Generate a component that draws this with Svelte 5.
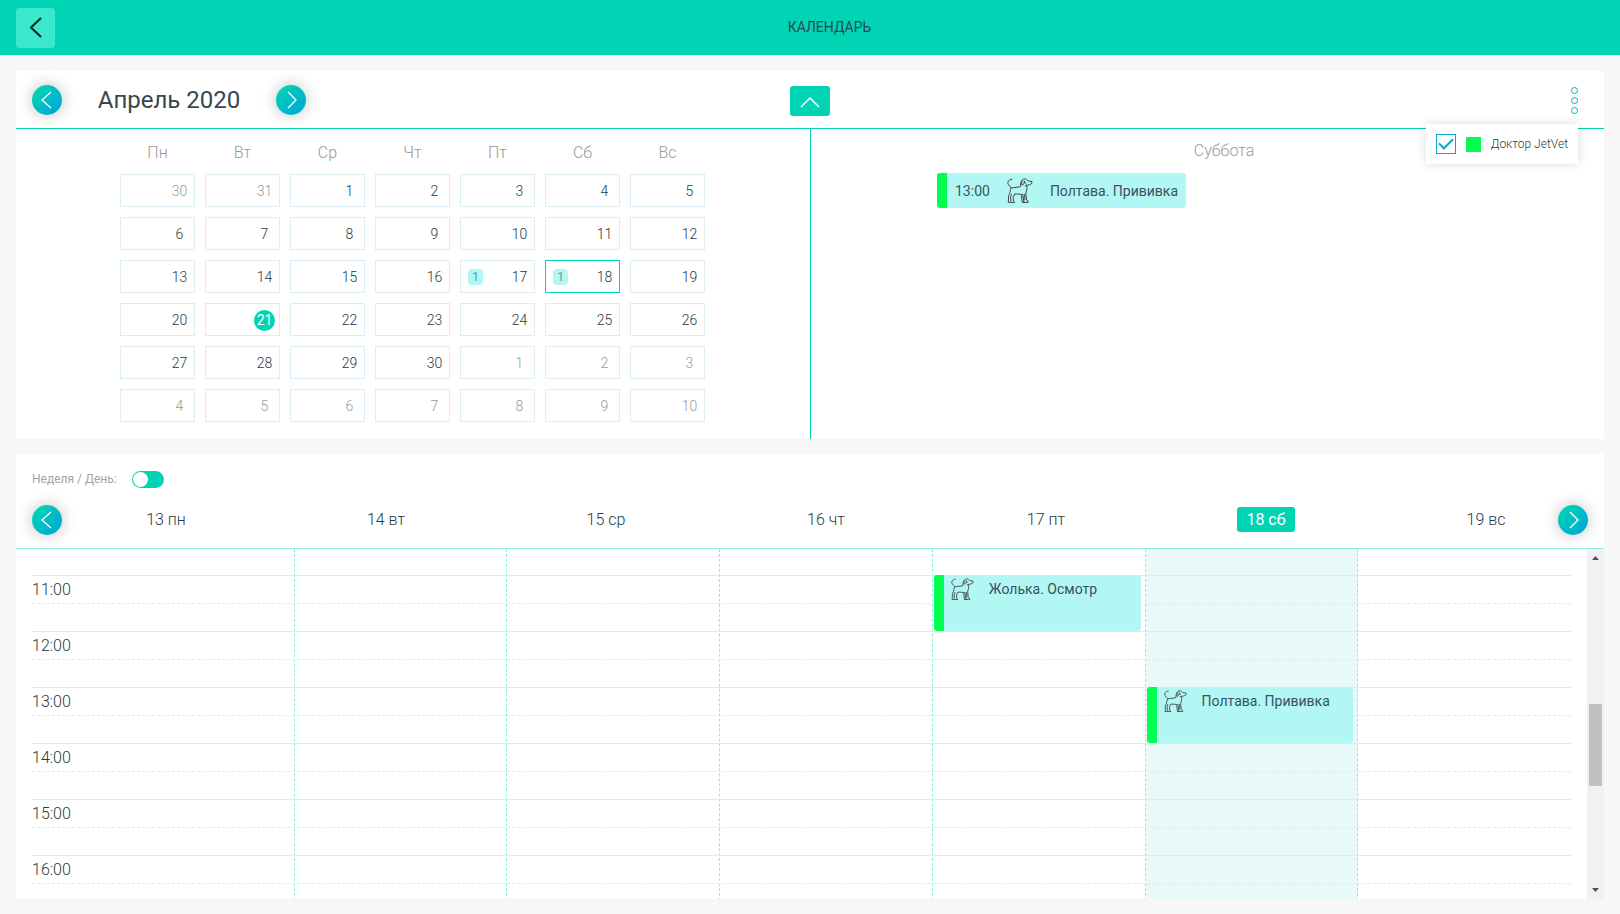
<script>
  const weekdays = ['Пн', 'Вт', 'Ср', 'Чт', 'Пт', 'Сб', 'Вс'];
  const days = Array.from({ length: 42 }, (_, i) => {
    const n = i - 1;
    if (n < 1) return { n: 31 + n, other: true };
    if (n > 30) return { n: n - 30, other: true };
    return { n, other: false, today: n === 21, selected: n === 18, count: n === 17 || n === 18 ? 1 : 0 };
  });
  const week = ['13 пн', '14 вт', '15 ср', '16 чт', '17 пт', '18 сб', '19 вс'];
  const hours = ['11:00', '12:00', '13:00', '14:00', '15:00', '16:00'];
  const events = [
    { title: 'Жолька. Осмотр', column: 6, row: 2 },
    { title: 'Полтава. Прививка', column: 7, row: 4 }
  ];
  const selectedIndex = 5;
  let doctorVisible = $state(true);
  let dayMode = $state(false);
</script>

{#snippet dog()}
  <svg class="dog" viewBox="0 0 80 78" aria-hidden="true">
    <path d="M16 4C6 4 0 12 4 20C7 26 12 26 13 31C22 28 33 30 42 26C41 16 43 5 53 3C59 2 62 6 65 9L77 11L76 17C71 21 66 22 60 22C64 33 60 38 58 46L60 68L65 71V75H52L49 51C40 51 32 48 24 49L19 60L20 70L23 75H4L5 54C13 44 7 37 13 31M53 9C54 17 51 22 46 21C43 19 46 12 48 9M54 10L57 17M44 53L47 75H54M14 49L11 58L12 72M54 49L55 68M60 22L55 25" />
  </svg>
{/snippet}

{#snippet chevron(dir)}
  <svg class="chevron" viewBox="0 0 30 30" aria-hidden="true">
    <path d={dir === 'left' ? 'M19 7L10 15L19 23' : 'M12 7L20 15L12 23'} />
  </svg>
{/snippet}

<div class="page">
  <header class="topbar">
    <button class="back" aria-label="Назад">
      <svg viewBox="0 0 39 40" aria-hidden="true"><path d="M25 10L15 19.500L25 29" /></svg>
    </button>
    <h1>КАЛЕНДАРЬ</h1>
  </header>

  <main>
    <section class="card">
      <div class="month-bar">
        <div class="month-nav">
          <button class="round" aria-label="Предыдущий месяц">{@render chevron('left')}</button>
          <h2>Апрель 2020</h2>
          <button class="round" aria-label="Следующий месяц">{@render chevron('right')}</button>
        </div>
        <button class="collapse" aria-label="Свернуть">
          <svg viewBox="0 0 40 30" aria-hidden="true"><path d="M11 21L20 12L29 21" /></svg>
        </button>
        <div class="more-wrap">
          <button class="more" aria-label="Фильтр врачей"><i></i><i></i><i></i></button>
          <label class="popover">
            <input type="checkbox" bind:checked={doctorVisible} />
            <span class="swatch"></span>
            <span>Доктор JetVet</span>
          </label>
        </div>
      </div>

      <div class="month-body">
        <div class="month">
          <div class="month-grid">
            {#each weekdays as name}
              <div class="weekday">{name}</div>
            {/each}
            {#each days as day}
              <button class="day" class:other={day.other} class:selected={day.selected}>
                {#if day.count}<span class="count">{day.count}</span>{/if}
                <span class="num" class:today={day.today}>{day.n}</span>
              </button>
            {/each}
          </div>
        </div>
        <div class="agenda">
          <h3>Суббота</h3>
          <div class="agenda-event">
            <time>13:00</time>
            {@render dog()}
            <span>Полтава. Прививка</span>
          </div>
        </div>
      </div>
    </section>

    <section class="card schedule">
      <label class="mode">
        <span>Неделя / День:</span>
        <input type="checkbox" role="switch" bind:checked={dayMode} />
      </label>
      <div class="week-bar">
        <div class="week">
          {#each week as name, i}
            <div class="week-day"><span class:active={i === selectedIndex}>{name}</span></div>
          {/each}
        </div>
        <button class="round prev" aria-label="Предыдущая неделя">{@render chevron('left')}</button>
        <button class="round next" aria-label="Следующая неделя">{@render chevron('right')}</button>
      </div>
      <div class="viewport">
        <div class="timetable">
          {#each week as name, i}
            <div class="column" class:active={i === selectedIndex} style:grid-column={i + 2}></div>
          {/each}
          {#each hours as hour, i}
            <div class="hour" style:grid-row={i + 2}>
              <time>{hour}</time>
              <div class="half"></div>
            </div>
          {/each}
          {#each events as event}
            <div class="event" style:grid-column={event.column} style:grid-row={event.row}>
              {@render dog()}
              <span>{event.title}</span>
            </div>
          {/each}
        </div>
        <div class="scrollbar" aria-hidden="true">
          <svg viewBox="0 0 17 17"><path d="M5 11H12L8.500 7Z" /></svg>
          <div class="track"><div class="thumb"></div></div>
          <svg viewBox="0 0 17 17"><path d="M5 6H12L8.500 10Z" /></svg>
        </div>
      </div>
    </section>
  </main>
</div>

<style>
  :global(body) {
    margin: 0;
    background: #f7f7f7;
  }
  .page {
    height: 100vh;
    display: flex;
    flex-direction: column;
    font-family: Roboto, sans-serif;
    font-weight: 300;
    font-size: 14px;
    color: #263a43;
  }
  .page :global(*) {
    box-sizing: border-box;
  }
  button {
    border: 0;
    padding: 0;
    background: none;
    font: inherit;
    color: inherit;
    cursor: pointer;
  }
  h1, h2, h3 {
    margin: 0;
    font-weight: inherit;
  }
  svg {
    display: block;
    fill: none;
  }
  .topbar {
    height: 55px;
    flex: none;
    display: flex;
    align-items: center;
    padding: 0 16px;
    background: #00d4b4;
  }
  .back {
    width: 39px;
    height: 40px;
    border-radius: 4px;
    background: #3be8ce;
  }
  .back svg {
    stroke: #06231f;
    stroke-width: 2;
  }
  h1 {
    flex: 1;
    padding-bottom: 2px;
    text-align: center;
    font-size: 14px;
    line-height: 20px;
    font-weight: 400;
    color: #1d4f52;
  }
  main {
    flex: 1;
    min-height: 0;
    display: flex;
    flex-direction: column;
    gap: 15px;
    padding: 16px 16px 15px;
  }
  .card {
    background: #fff;
  }
  .month-bar {
    height: 58px;
    display: grid;
    grid-template-columns: 1fr 40px 1fr;
    align-items: center;
    padding: 0 26px 0 16px;
    border-bottom: 1px solid #00d4b4;
  }
  .month-nav {
    display: flex;
    align-items: center;
  }
  h2 {
    width: 214px;
    text-align: center;
    font-size: 24px;
    line-height: 30px;
    font-weight: 400;
    color: #37474f;
  }
  .round {
    width: 30px;
    height: 30px;
    flex: none;
    border-radius: 50%;
    background: linear-gradient(135deg, #00d4b4 10%, #00a8d4 90%);
    box-shadow: 0 0 15px rgba(0, 0, 0, 0.25);
  }
  .chevron {
    stroke: #fff;
    stroke-width: 1.3;
  }
  .collapse {
    margin: 2px 0 0 5px;
    width: 40px;
    height: 30px;
    border-radius: 3px;
    background: #00d4b4;
  }
  .collapse svg {
    stroke: #fff;
    stroke-width: 1.5;
  }
  .more-wrap {
    position: relative;
    justify-self: end;
    margin-top: 2px;
  }
  .more {
    display: flex;
    flex-direction: column;
    gap: 3px;
  }
  .more i {
    width: 7px;
    height: 7px;
    border: 1px solid #00b0c4;
    border-radius: 50%;
  }
  .popover {
    position: absolute;
    top: 37px;
    right: 0;
    z-index: 2;
    height: 40px;
    display: flex;
    align-items: center;
    gap: 10px;
    padding: 0 10px;
    background: #fff;
    box-shadow: 0 0 10px rgba(0, 0, 0, 0.15);
    font-size: 12px;
    white-space: nowrap;
  }
  .popover input {
    appearance: none;
    width: 20px;
    height: 20px;
    margin: 0;
    border: 1px solid #0aa5cd;
    display: grid;
    place-items: center;
  }
  .popover input:checked::before {
    content: '';
    width: 12px;
    height: 6px;
    border: solid #0aa5cd;
    border-width: 0 0 2px 2px;
    transform: translateY(-2px) rotate(-45deg);
  }
  .swatch {
    width: 15px;
    height: 15px;
    background: #00ff50;
  }
  .month-body {
    display: grid;
    grid-template-columns: 1fr 1fr;
  }
  .month {
    display: flex;
    justify-content: center;
    padding: 0 1px 17px 0;
  }
  .month-grid {
    display: grid;
    grid-template-columns: repeat(7, 75px);
    gap: 10px;
  }
  .weekday {
    padding-top: 12px;
    height: 35px;
    text-align: center;
    font-size: 16px;
    line-height: 24px;
    color: #999;
  }
  .day {
    height: 33px;
    display: flex;
    align-items: center;
    padding: 1px 4px 0 7px;
    border: 1px solid #dceef5;
  }
  .day.other {
    color: #999;
  }
  .day.selected {
    border-color: #00d4b4;
  }
  .count {
    width: 15px;
    height: 16px;
    border-radius: 4px;
    background: #b2f7f4;
    font-size: 12px;
    line-height: 16px;
    color: #5c9c9c;
    font-weight: 400;
  }
  .num {
    margin-left: auto;
    width: 21px;
    height: 21px;
    line-height: 21px;
    text-align: center;
  }
  .num.today {
    border-radius: 50%;
    background: #00d4b4;
    color: #fff;
    font-weight: 400;
  }
  .agenda {
    border-left: 1px solid #00d4b4;
    padding: 10px 93px 0 126px;
    display: flex;
    flex-direction: column;
    align-items: flex-start;
    gap: 10px;
  }
  h3 {
    width: 100%;
    text-align: center;
    font-size: 16px;
    line-height: 24px;
    color: #999;
  }
  .dog {
    width: 26px;
    flex: none;
    stroke: #333;
    stroke-width: 2.800;
    stroke-linejoin: round;
  }
  .agenda-event {
    height: 35px;
    display: flex;
    align-items: center;
    gap: 17px;
    padding: 0 8px;
    border-left: 10px solid #00ff50;
    border-radius: 3px;
    background: #b2f7f4;
    font-weight: 400;
    color: #37535b;
  }
  .schedule {
    flex: 1;
    min-height: 0;
    display: flex;
    flex-direction: column;
  }
  .mode {
    align-self: flex-start;
    display: flex;
    align-items: center;
    gap: 15px;
    padding: 16px 16px 0;
    font-size: 12px;
    line-height: 18px;
    font-weight: 400;
    color: #a4a4a4;
  }
  .mode input {
    appearance: none;
    width: 32px;
    height: 17px;
    margin: 0;
    padding: 1px;
    border-radius: 9px;
    background: #00d4b4;
  }
  .mode input::before {
    content: '';
    display: block;
    width: 15px;
    height: 15px;
    border-radius: 50%;
    background: #fff;
  }
  .mode input:checked::before {
    margin-left: auto;
  }
  .week-bar {
    display: grid;
    align-items: center;
    padding: 17px 0 13px;
    border-bottom: 1px solid #88f0e2;
  }
  .week-bar > * {
    grid-area: 1 / 1;
  }
  .prev {
    margin-left: 16px;
  }
  .next {
    justify-self: end;
    margin-right: 16px;
  }
  .week {
    display: grid;
    grid-template-columns: repeat(7, 1fr);
    padding: 0 8px 2px 40px;
    font-size: 16px;
    line-height: 25px;
    text-align: center;
  }
  .week-day span {
    display: inline-block;
    padding: 0 9px;
  }
  .week-day .active {
    border-radius: 3px;
    background: #00d4b4;
    color: #fff;
    font-weight: 400;
  }
  .viewport {
    flex: 1;
    min-height: 0;
    display: flex;
    overflow: hidden;
  }
  .timetable {
    flex: 1;
    display: grid;
    grid-template-columns: 50px repeat(7, 1fr);
    grid-template-rows: 26px repeat(6, 56px);
    padding: 0 16px;
  }
  .column {
    grid-row: 1 / -1;
    border-right: 1px dashed #88f0e2;
  }
  .column:nth-child(7) {
    border-right: 0;
  }
  .column.active {
    background: #e9f8f8;
  }
  .hour {
    grid-column: 1 / -1;
    border-top: 1px solid #c8f5ee;
  }
  .hour time {
    display: block;
    font-size: 16px;
    line-height: 27px;
  }
  .half {
    height: 28px;
    border-top: 1px dashed #c8f5ee;
  }
  .event {
    display: flex;
    align-items: flex-start;
    gap: 15px;
    margin: 0 5px 0 1px;
    padding: 2px 7px;
    border-left: 10px solid #00ff50;
    border-radius: 3px;
    background: #b2f7f4;
    font-weight: 400;
    line-height: 24px;
    color: #37535b;
    white-space: nowrap;
  }
  .event .dog {
    width: 23px;
    margin-top: 1px;
  }
  .scrollbar {
    width: 17px;
    flex: none;
    display: flex;
    flex-direction: column;
    background: #f1f1f1;
  }
  .scrollbar svg {
    width: 17px;
    height: 17px;
    fill: #505050;
  }
  .track {
    flex: 1;
    padding: 138px 2px 0;
  }
  .thumb {
    height: 82px;
    background: #c1c1c1;
  }
</style>
